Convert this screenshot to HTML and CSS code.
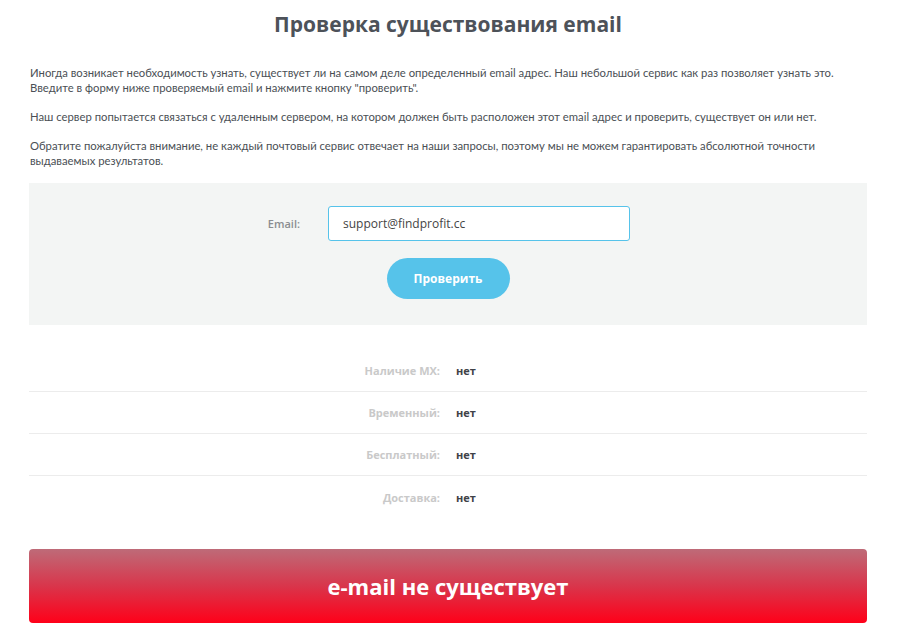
FILE: index.html
```html
<!DOCTYPE html>
<html lang="ru">
<head>
    <meta charset="UTF-8">
    <meta name="viewport" content="width=device-width, initial-scale=1.0">
    <title>Проверка существования email</title>
    <link rel="stylesheet" href="styles.css">
</head>
<body>
    <div class="container">
        <h1>Проверка существования email</h1>

        <div class="intro">
            <p>Иногда возникает необходимость узнать, существует ли на самом деле определенный email адрес. Наш небольшой сервис как раз позволяет узнать это. Введите в форму ниже проверяемый email и нажмите кнопку "проверить".</p>
            <p>Наш сервер попытается связаться с удаленным сервером, на котором должен быть расположен этот email адрес и проверить, существует он или нет.</p>
            <p>Обратите пожалуйста внимание, не каждый почтовый сервис отвечает на наши запросы, поэтому мы не можем гарантировать абсолютной точности выдаваемых результатов.</p>
        </div>

        <form class="check-form" onsubmit="return false;">
            <div class="form-row">
                <label class="form-label" for="email">Email:</label>
                <input type="text" id="email" class="form-input" value="support@findprofit.cc">
            </div>
            <button class="check-btn" type="submit">Проверить</button>
        </form>

        <div class="results">
            <div class="result-row">
                <span class="result-label">Наличие MX:</span>
                <span class="result-value">нет</span>
            </div>
            <div class="result-row">
                <span class="result-label">Временный:</span>
                <span class="result-value">нет</span>
            </div>
            <div class="result-row">
                <span class="result-label">Бесплатный:</span>
                <span class="result-value">нет</span>
            </div>
            <div class="result-row">
                <span class="result-label">Доставка:</span>
                <span class="result-value">нет</span>
            </div>
        </div>

        <div class="verdict">e-mail не существует</div>
    </div>
</body>
</html>
```

FILE: styles.css
```css
:root {
    --heading-color: #4d5259;
    --text-color: #444a50;
    --panel-bg: #f3f5f4;
    --accent-blue: #56c3ea;
    --line-color: #ececec;
}

body {
    margin: 0;
    padding: 0;
    background: #ffffff;
    font-family: 'Open Sans', 'Liberation Sans', sans-serif;
    color: var(--text-color);
}

.container {
    margin: 0 36px 0 29px;
    padding-top: 10px;
}

h1 {
    margin: 0;
    text-align: center;
    font-family: 'Open Sans', sans-serif;
    font-size: 21px;
    font-weight: 700;
    line-height: 28px;
    color: var(--heading-color);
}

.intro {
    padding: 27px 1px 15px 1px;
}

.intro p {
    margin: 0 0 14px 0;
    font-family: Lato, 'Open Sans', sans-serif;
    font-size: 11.3px;
    line-height: 15px;
    color: #4a4f55;
}

.intro p:last-child {
    margin-bottom: 0;
}

.check-form {
    background: var(--panel-bg);
    margin: 0;
    padding: 23px 0 26px 0;
    display: flex;
    flex-direction: column;
    align-items: center;
}

.form-row {
    display: flex;
    align-items: center;
    width: 100%;
}

.form-label {
    width: 271px;
    text-align: right;
    font-size: 11px;
    font-weight: 600;
    color: #8a8d90;
    padding-bottom: 1px;
}

.form-input {
    margin-left: 28px;
    width: 302px;
    height: 35px;
    box-sizing: border-box;
    border: 1px solid var(--accent-blue);
    border-radius: 3px;
    padding: 0 14px;
    font-family: 'Open Sans', sans-serif;
    font-size: 12px;
    color: #444;
    background: #fff;
    outline: none;
}

.check-btn {
    margin-top: 17px;
    width: 123px;
    height: 41px;
    border: none;
    border-radius: 21px;
    background: var(--accent-blue);
    color: #fff;
    font-family: 'Open Sans', sans-serif;
    font-size: 12px;
    font-weight: 700;
    cursor: pointer;
}

.results {
    margin-top: 25px;
}

.result-row {
    display: flex;
    align-items: center;
    height: 42px;
    border-bottom: 1px solid var(--line-color);
    box-sizing: border-box;
}

.result-row:last-child {
    border-bottom: none;
}

.result-label {
    width: 411px;
    text-align: right;
    font-size: 11px;
    font-weight: 700;
    color: #c9c9c9;
}

.result-value {
    margin-left: 16px;
    font-size: 11px;
    font-weight: 700;
    color: #3f4348;
}

.verdict {
    margin-top: 31px;
    height: 74px;
    display: flex;
    align-items: center;
    justify-content: center;
    border-radius: 4px;
    background: linear-gradient(to bottom, #be6b78 0%, #d9354b 50%, #ff0019 100%);
    color: #fff;
    font-size: 22px;
    font-weight: 700;
}
```
